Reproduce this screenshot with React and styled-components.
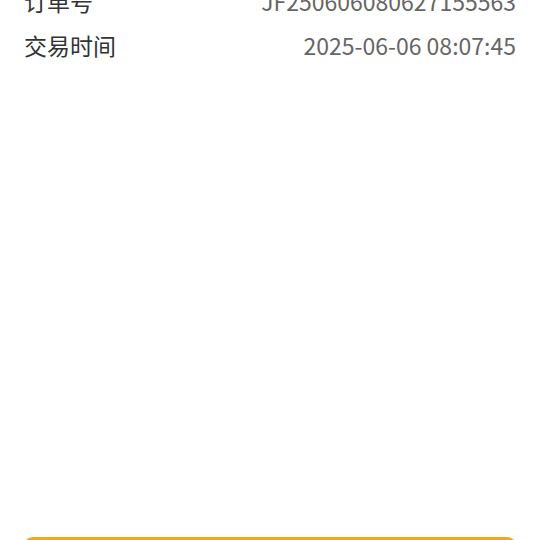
import styled, { createGlobalStyle } from "styled-components";

const GlobalStyle = createGlobalStyle`
  html, body {
    margin: 0;
    padding: 0;
    background: #fff;
  }
  body {
    font-family: "Noto Sans CJK SC", "Noto Sans", sans-serif;
  }
`;

const details = [
  { label: "订单号", value: "JF250606080627155563" },
  { label: "交易时间", value: "2025-06-06 08:07:45" },
];

const App = () => {
  return (
    <>
      <GlobalStyle />
      <Page>
        <Details>
          {details.map((item) => (
            <Row key={item.label}>
              <Label>{item.label}</Label>
              <Value>{item.value}</Value>
            </Row>
          ))}
        </Details>
        <Footer>
          <SubmitButton>完成</SubmitButton>
        </Footer>
      </Page>
    </>
  );
};

export default App;

const Page = styled.div`
  height: 100vh;
  overflow: hidden;
  display: flex;
  flex-direction: column;
`;

const Details = styled.div`
  margin-top: -21px;
  padding: 0 24px;
`;

const Row = styled.div`
  display: flex;
  align-items: center;
  justify-content: space-between;
  height: 44px;
  line-height: 1;
`;

const Label = styled.span`
  font-size: 23px;
  color: #333;
`;

const Value = styled.span`
  font-size: 23px;
  color: #666;
`;

const Footer = styled.div`
  padding: 470px 23px 0 23px;
`;

const SubmitButton = styled.button`
  display: block;
  width: 100%;
  height: 88px;
  border: none;
  border-radius: 10px;
  background: #faa61b;
  color: #fff;
  font-family: inherit;
  font-size: 22px;
`;
